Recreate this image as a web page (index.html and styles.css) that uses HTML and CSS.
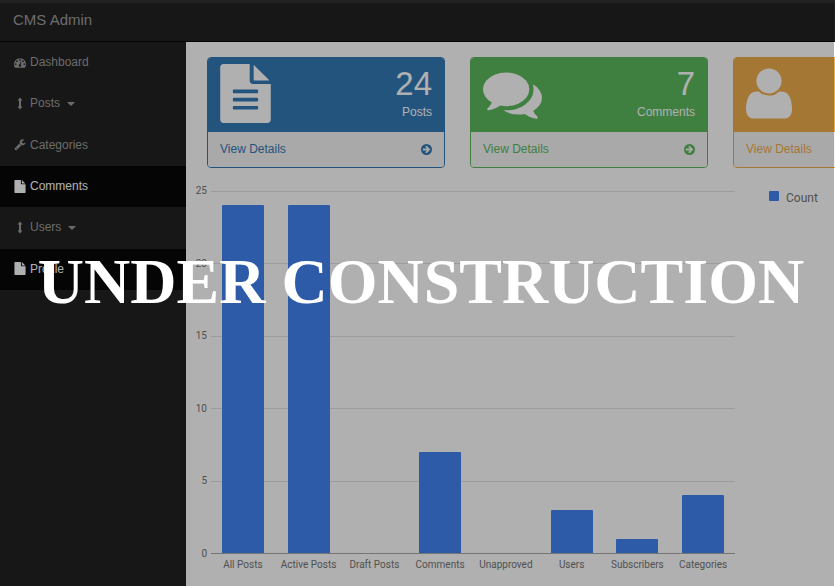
FILE: index.html
```html
<!DOCTYPE html>
<html lang="en">
<head>
<meta charset="utf-8">
<title>CMS Admin</title>
<link rel="stylesheet" href="styles.css">
</head>
<body>
<svg class="sprite" aria-hidden="true">
  <symbol id="i-dash" viewBox="0 0 1792 1792"><path d="M384 1152q0-53-37.500-90.500t-90.500-37.500-90.500 37.500-37.500 90.500 37.500 90.500 90.500 37.500 90.500-37.500 37.500-90.500zm192-448q0-53-37.500-90.500t-90.500-37.500-90.500 37.500-37.500 90.500 37.500 90.500 90.500 37.500 90.500-37.500 37.500-90.500zm428 481l101-382q6-26-7.500-48.500t-38.500-29.500-48 6.500-30 39.500l-101 382q-60 5-107 43.500t-63 98.500q-20 77 20 146t117 89 146-20 89-117q16-60-6-117t-72-91zm660-33q0-53-37.500-90.500t-90.500-37.500-90.500 37.500-37.500 90.500 37.500 90.500 90.500 37.500 90.500-37.500 37.500-90.500zm-640-640q0-53-37.500-90.500t-90.500-37.500-90.500 37.500-37.500 90.500 37.500 90.500 90.500 37.500 90.500-37.500 37.500-90.500zm448 192q0-53-37.500-90.500t-90.500-37.500-90.500 37.500-37.500 90.500 37.500 90.500 90.500 37.500 90.500-37.500 37.500-90.500zm320 448q0 261-141 483-19 29-54 29h-1402q-35 0-54-29-141-221-141-483 0-182 71-348t191-286 286-191 348-71 348 71 286 191 191 286 71 348z"/></symbol>
  <symbol id="i-updown" viewBox="0 0 12 12"><path d="M6 0l2.500 3H7v6h1.500L6 12 3.500 9H5V3H3.500z"/></symbol>
  <symbol id="i-wrench" viewBox="0 0 1792 1792"><path d="M448 1472q0-26-19-45t-45-19-45 19-19 45 19 45 45 19 45-19 19-45zm644-420l-682 682q-37 37-90 37-52 0-91-37l-106-108q-38-36-38-90 0-53 38-91l681-681q39 98 114.500 173.500t173.500 114.500zm634-435q0 39-23 106-47 134-164.500 217.500t-258.500 83.500q-185 0-316.500-131.500t-131.500-316.500 131.500-316.500 316.500-131.500q58 0 121.500 16.500t107.500 46.500q16 11 16 28t-16 28l-293 169v224l193 107q5-3 79-48.500t135.500-81 70.500-35.500q15 0 23.500 10t8.500 25z"/></symbol>
  <symbol id="i-file" viewBox="0 0 1536 1792"><path d="M896 0v480q0 40 28 68t68 28h544v1120q0 40-28 68t-68 28H96q-40 0-68-28t-28-68V96Q0 56 28 28T96 0zM1024 8q22 14 36 28l408 408q14 14 28 36H1024z"/></symbol>
  <symbol id="i-filetext" viewBox="0 0 1536 1792"><path fill-rule="evenodd" d="M896 0v512q0 40 28 68t68 28h544v1088q0 40-28 68t-68 28H96q-40 0-68-28t-28-68V96Q0 56 28 28T96 0zM384 800v64q0 24 32 24h704q32 0 32-24v-64q0-24-32-24H416q-32 0-32 24zM384 1048v64q0 24 32 24h704q32 0 32-24v-64q0-24-32-24H416q-32 0-32 24zM384 1296v64q0 24 32 24h704q32 0 32-24v-64q0-24-32-24H416q-32 0-32 24z"/><path d="M1016 30q22 14 36 28l408 408q14 14 28 36H1016z"/></symbol>
  <symbol id="i-comments" viewBox="0 0 1792 1792"><path d="M1408 768q0 139-94 257t-256.500 186.500-353.500 68.500q-86 0-176-16-124 88-278 128-36 9-86 16h-3q-11 0-20.500-8t-11.500-21q-1-3-1-6.500t.5-6.500 2-6l2.500-5 3.500-5.500 4-5 4.500-5 4-4.500q5-6 23-25t26-29.500 22.500-29 25-38.500 20.500-44q-124-72-195-177t-71-224q0-139 94-257t256.500-186.500 353.500-68.500 353.500 68.500 256.500 186.500 94 257zm384 256q0 120-71 224.500t-195 176.500q10 24 20.500 44t25 38.500 22.500 29 26 29.500 23 25q1 1 4 4.500t4.500 5 4 5 3.500 5.500l2.500 5 2 6 .5 6.500-1 6.500q-3 14-13 22t-22 7q-50-7-86-16-154-40-278-128-90 16-176 16-271 0-472-132 58 4 88 4 161 0 309-45t264-129q125-92 192-212t67-254q0-77-23-152 129 71 204 178t75 230z"/></symbol>
  <symbol id="i-user" viewBox="192 0 1408 1792"><path d="M1600 1399q0 109-62.500 187t-150.500 78H405q-88 0-150.500-78T192 1399q0-85 8.500-160.500t31.500-152 58.500-131 94-89 198.500-34.500q131 128 313 128t313-128q140 0 198.500 34.500t94 89 58.500 131 31.500 152 8.500 160.500z"/><circle cx="896" cy="512" r="384"/></symbol>
  <symbol id="i-go" viewBox="0 0 1536 1536"><path fill-rule="evenodd" d="M1285 768q0 27-18 45l-91 91-362 362q-18 18-45 18t-45-18l-91-91q-18-18-18-45t18-45l189-189H320q-26 0-45-19t-19-45V704q0-26 19-45t45-19h502L633 451q-19-19-19-45t19-45l91-91q18-18 45-18t45 18l362 362 91 91q18 18 18 45zM1536 768A768 768 0 1 1 0 768A768 768 0 1 1 1536 768z"/></symbol>
</svg>

<header class="topbar"><a class="brand" href="#">CMS Admin</a></header>

<div class="layout">
  <nav class="sidebar">
    <ul class="menu">
      <li><a href="#"><svg class="icon"><use href="#i-dash"/></svg>Dashboard</a></li>
      <li><a href="#"><svg class="icon"><use href="#i-updown"/></svg>Posts<span class="caret"></span></a></li>
      <li><a href="#"><svg class="icon"><use href="#i-wrench"/></svg>Categories</a></li>
      <li><a class="active" href="#"><svg class="icon"><use href="#i-file"/></svg>Comments</a></li>
      <li><a href="#"><svg class="icon"><use href="#i-updown"/></svg>Users<span class="caret"></span></a></li>
      <li><a class="active" href="#"><svg class="icon"><use href="#i-file"/></svg>Profile</a></li>
    </ul>
  </nav>

  <main class="content">
    <section class="panels">
      <article class="panel blue">
        <div class="panel-head">
          <svg class="wide"><use href="#i-filetext"/></svg>
          <div class="stat"><div class="number">24</div><div class="label">Posts</div></div>
        </div>
        <a class="panel-foot" href="#">View Details<svg class="go"><use href="#i-go"/></svg></a>
      </article>
      <article class="panel green">
        <div class="panel-head">
          <svg class="wider"><use href="#i-comments"/></svg>
          <div class="stat"><div class="number">7</div><div class="label">Comments</div></div>
        </div>
        <a class="panel-foot" href="#">View Details<svg class="go"><use href="#i-go"/></svg></a>
      </article>
      <article class="panel orange">
        <div class="panel-head">
          <svg class="person"><use href="#i-user"/></svg>
        </div>
        <a class="panel-foot" href="#">View Details<svg class="go"><use href="#i-go"/></svg></a>
      </article>
    </section>

    <section class="chart">
      <div class="y-axis"><span>25</span><span>20</span><span>15</span><span>10</span><span>5</span><span>0</span></div>
      <div class="plot">
        <div class="lines"><i></i><i></i><i></i><i></i><i></i><i></i></div>
        <div class="bars">
          <div style="height:96%"></div>
          <div style="height:96%"></div>
          <div style="height:0%"></div>
          <div style="height:28%"></div>
          <div style="height:0%"></div>
          <div style="height:12%"></div>
          <div style="height:4%"></div>
          <div style="height:16%"></div>
        </div>
      </div>
      <div class="legend"><span class="swatch"></span>Count</div>
      <div class="x-axis"><span>All Posts</span><span>Active Posts</span><span>Draft Posts</span><span>Comments</span><span>Unapproved</span><span>Users</span><span>Subscribers</span><span>Categories</span></div>
    </section>
  </main>
</div>

<div class="overlay"><h1>UNDER CONSTRUCTION</h1></div>
</body>
</html>
```

FILE: styles.css
```css
* { box-sizing: border-box; }

body {
  margin: 0;
  min-height: 100vh;
  display: flex;
  flex-direction: column;
  overflow: hidden;
  background: #222;
  font: 12px/17px "Liberation Sans", Arial, sans-serif;
}

a { color: inherit; text-decoration: none; }
svg { fill: currentColor; flex: none; }
.sprite { display: none; }

.topbar {
  height: 42px;
  padding: 10px 13px;
  border-bottom: 1px solid #080808;
}
.brand { font-size: 15px; line-height: 20px; color: #9d9d9d; display: block; }

.layout { flex: 1; display: grid; grid-template-columns: 186px minmax(0, 1fr); }

.menu {
  list-style: none;
  margin: 0;
  padding: 0;
  height: 248px;
  display: grid;
  grid-template-rows: repeat(6, 1fr);
}
.menu a {
  height: 100%;
  display: flex;
  align-items: center;
  padding: 0 14px;
  color: #9d9d9d;
}
.menu .active { background: #080808; color: #fff; }
.icon { width: 12px; height: 13px; margin: 0 4px 1px 0; }
.caret {
  margin-left: 7px;
  border: 4px solid transparent;
  border-top-color: currentColor;
  border-bottom: 0;
}

.content { background: #fff; padding: 15px 0 0; overflow: hidden; }

.panels {
  display: grid;
  grid-auto-flow: column;
  grid-auto-columns: 238px;
  gap: 25px;
  padding-left: 21px;
}
.panel { border: 1px solid var(--tone); border-radius: 4px; overflow: hidden; color: var(--tone); }
.blue { --tone: #337ab7; }
.green { --tone: #5cb85c; }
.orange { --tone: #f0ad4e; }
.panel-head {
  display: flex;
  justify-content: space-between;
  padding: 6px 12px 9px;
  background: var(--tone);
  color: #fff;
}
.wide { width: 51px; height: 59px; }
.wider { width: 59px; height: 59px; }
.person { width: 46px; height: 59px; }
.stat { text-align: right; }
.number { font-size: 33px; line-height: 40px; }
.label { line-height: 16px; }
.panel-foot {
  display: flex;
  justify-content: space-between;
  align-items: center;
  padding: 9px 12px;
  background: #f5f5f5;
}
.go { width: 11px; height: 11px; }

.chart {
  display: grid;
  grid-template-columns: 25px minmax(0, 1fr) 100px;
  grid-template-rows: 363px auto;
  margin-top: 23px;
  font-family: Roboto, sans-serif;
  font-size: 10px;
  line-height: 12px;
  color: #757575;
}
.y-axis {
  display: flex;
  flex-direction: column;
  justify-content: space-between;
  margin: -6px 4px -6px 0;
  text-align: right;
}
.plot { position: relative; display: grid; }
.lines {
  position: absolute;
  inset: 0;
  display: flex;
  flex-direction: column;
  justify-content: space-between;
}
.lines i { height: 1px; background: #e2e2e2; }
.lines i:last-child { background: #aaa; }
.bars {
  position: relative;
  display: grid;
  grid-template-columns: repeat(8, 1fr);
  align-items: end;
  justify-items: center;
  margin: 0 -1px 1px;
}
.bars div { width: 42px; background: #4285f4; border-radius: 1px 1px 0 0; }
.legend {
  display: flex;
  align-items: flex-start;
  gap: 7px;
  padding-left: 34px;
  font-size: 12px;
  line-height: 15px;
}
.swatch { width: 10px; height: 10px; border-radius: 1px; background: #4285f4; }
.x-axis {
  grid-column: 2;
  display: grid;
  grid-template-columns: repeat(8, 1fr);
  margin: 5px -1px 0;
  text-align: center;
  white-space: nowrap;
}

.overlay {
  position: fixed;
  inset: 3px 1px 0 0;
  background: rgba(0, 0, 0, .31);
  display: flex;
  justify-content: center;
  padding: 243px 0 0 8px;
}
.overlay h1 {
  margin: 0;
  color: #fff;
  font: bold 64px/72px "Liberation Serif", "Times New Roman", serif;
  white-space: nowrap;
}
```
